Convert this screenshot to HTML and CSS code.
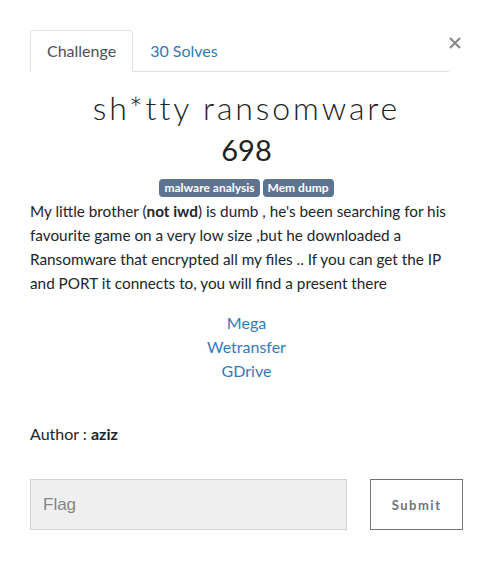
FILE: index.html
```html
<!DOCTYPE html>
<html>
<head>
<meta charset="utf-8">
<link rel="stylesheet" href="styles.css">
</head>
<body>
<div class="modal">
  <div class="header">
    <ul class="tabs">
      <li class="tab active">Challenge</li>
      <li class="tab link">30 Solves</li>
    </ul>
    <button class="close" aria-label="Close">
      <svg width="12" height="12" viewBox="0 0 12 12"><path d="M1 1L11 11M11 1L1 11" stroke="#8a8a8a" stroke-width="2.2" fill="none"/></svg>
    </button>
  </div>
  <h2 class="title">sh*tty ransomware</h2>
  <h4 class="value">698</h4>
  <div class="tags">
    <span class="badge">malware analysis</span>
    <span class="badge">Mem dump</span>
  </div>
  <p class="desc">My little brother (<b>not iwd</b>) is dumb , he's been searching for his favourite game on a very low size ,but he downloaded a Ransomware that encrypted all my files .. If you can get the IP and PORT it connects to, you will find a present there</p>
  <div class="files">
    <a class="file">Mega</a>
    <a class="file">Wetransfer</a>
    <a class="file">GDrive</a>
  </div>
  <p class="author">Author : <b>aziz</b></p>
  <div class="submit-row">
    <input class="flag" type="text" placeholder="Flag">
    <button class="submit">Submit</button>
  </div>
</div>
</body>
</html>
```

FILE: styles.css
```css
html, body {
  margin: 0;
  padding: 0;
  background: #fff;
}
body {
  font-family: Lato, "Noto Sans", sans-serif;
  font-size: 16px;
  line-height: 24px;
  color: #212529;
}
.modal {
  padding: 30px 28px 0 30px;
}
.header {
  display: flex;
  align-items: flex-start;
}
.tabs {
  list-style: none;
  margin: 0;
  padding: 0;
  display: flex;
  width: 420px;
  border-bottom: 1px solid #dee2e6;
}
.tab {
  padding: 8px 16px;
  border: 1px solid transparent;
  border-top-left-radius: 4px;
  border-top-right-radius: 4px;
  margin-bottom: -1px;
}
.tab.active {
  color: #495057;
  border-color: #dee2e6 #dee2e6 #fff;
  background: #fff;
}
.tab.link {
  color: #337ab7;
}
.close {
  margin-left: auto;
  margin-top: 7px;
  margin-right: 2px;
  padding: 0;
  border: 0;
  background: none;
  width: 12px;
  height: 12px;
  display: block;
}
.close svg {
  display: block;
}
.title {
  margin: 16px 0 0;
  text-align: center;
  font-weight: 300;
  font-size: 32px;
  line-height: 40px;
  letter-spacing: 2.9px;
  color: #222;
}
.value {
  margin: 4px 0 0;
  text-align: center;
  font-weight: 400;
  font-size: 29px;
  line-height: 36px;
  color: #222;
}
.tags {
  margin-top: 11px;
  display: flex;
  justify-content: center;
  gap: 3px;
}
.badge {
  background: #5c7391;
  color: #fff;
  font-weight: 700;
  font-size: 12px;
  line-height: 12px;
  padding: 3px 5px;
  border-radius: 4px;
}
.desc {
  margin: 2px 0 16px;
  width: 433px;
  font-size: 15.3px;
}
.files {
  display: flex;
  flex-direction: column;
  align-items: center;
}
.file {
  color: #337ab7;
}
.author {
  margin: 39px 0 0;
}
.submit-row {
  display: flex;
  margin-top: 33px;
  gap: 23px;
}
.flag {
  box-sizing: border-box;
  width: 318px;
  height: 51px;
  margin: 0;
  padding: 0 12px;
  background: #efefef;
  border: 1px solid #cfd3d8;
  border-radius: 0;
  font-family: "Liberation Sans", Arial, sans-serif;
  font-size: 17px;
  color: #495057;
  outline: none;
}
.flag::placeholder {
  color: #858585;
}
.submit {
  box-sizing: border-box;
  width: 93px;
  height: 51px;
  margin: 0;
  background: #fff;
  border: 1px solid #6c757d;
  border-radius: 0;
  font-family: Lato, sans-serif;
  font-weight: 700;
  font-size: 13px;
  letter-spacing: 1.5px;
  color: #6c757d;
}
```
